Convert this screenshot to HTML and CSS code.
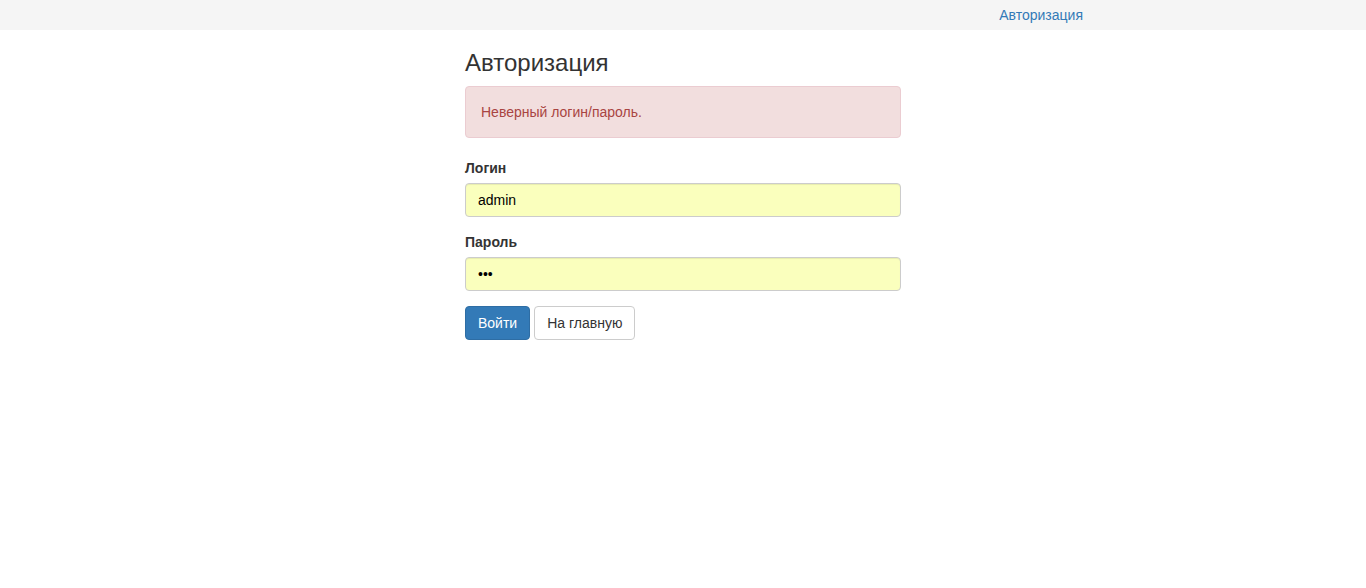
FILE: index.html
```html
<!DOCTYPE html>
<html lang="ru">
<head>
<meta charset="utf-8">
<title>Авторизация</title>
<link rel="stylesheet" href="styles.css">
</head>
<body>
<nav class="navbar">
  <a class="nav-link" href="#">Авторизация</a>
</nav>
<main class="container">
  <h3 class="title">Авторизация</h3>
  <div class="alert">Неверный логин/пароль.</div>
  <form class="form">
    <div class="form-group">
      <label class="label" for="login">Логин</label>
      <input class="input" id="login" type="text" value="admin">
    </div>
    <div class="form-group">
      <label class="label" for="pass">Пароль</label>
      <input class="input" id="pass" type="password" value="abc">
    </div>
    <div class="actions">
      <button class="btn btn-primary" type="button">Войти</button>
      <button class="btn btn-default" type="button">На главную</button>
    </div>
  </form>
</main>
</body>
</html>
```
FILE: styles.css
```css
* { box-sizing: border-box; }
html, body { margin: 0; padding: 0; }
body {
  font-family: "Liberation Sans", Arial, sans-serif;
  font-size: 14px;
  line-height: 20px;
  color: #333;
  background: #fff;
}
.navbar {
  height: 30px;
  background: #f5f5f5;
  display: flex;
  justify-content: flex-end;
  align-items: center;
  padding-right: 283px;
}
.nav-link {
  color: #337ab7;
  text-decoration: none;
  font-size: 14px;
  line-height: 20px;
}
.container {
  width: 436px;
  margin: 0 auto;
}
.title {
  font-size: 24px;
  font-weight: 500;
  line-height: 26px;
  margin: 20px 0 10px;
  color: #333;
}
.alert {
  background: #f2dede;
  border: 1px solid #ebccd1;
  color: #a94442;
  border-radius: 4px;
  padding: 15px;
  margin-bottom: 20px;
}
.form { margin: 0; }
.form-group { margin-bottom: 15px; }
.label {
  display: block;
  font-weight: bold;
  margin-bottom: 5px;
  color: #333;
}
.input {
  display: block;
  width: 100%;
  height: 34px;
  padding: 6px 12px;
  font-family: "Liberation Sans", Arial, sans-serif;
  font-size: 14px;
  line-height: 20px;
  color: #000;
  background: #faffbd;
  border: 1px solid #ccc;
  border-radius: 4px;
  box-shadow: inset 0 1px 1px rgba(0,0,0,.075);
  outline: none;
}
.actions {
  display: flex;
  gap: 4px;
}
.btn {
  height: 34px;
  padding: 6px 12px;
  font-family: "Liberation Sans", Arial, sans-serif;
  font-size: 14px;
  line-height: 20px;
  border: 1px solid transparent;
  border-radius: 4px;
  cursor: pointer;
}
.btn-primary {
  background: #337ab7;
  border-color: #2e6da4;
  color: #fff;
}
.btn-default {
  background: #fff;
  border-color: #ccc;
  color: #333;
}
```
